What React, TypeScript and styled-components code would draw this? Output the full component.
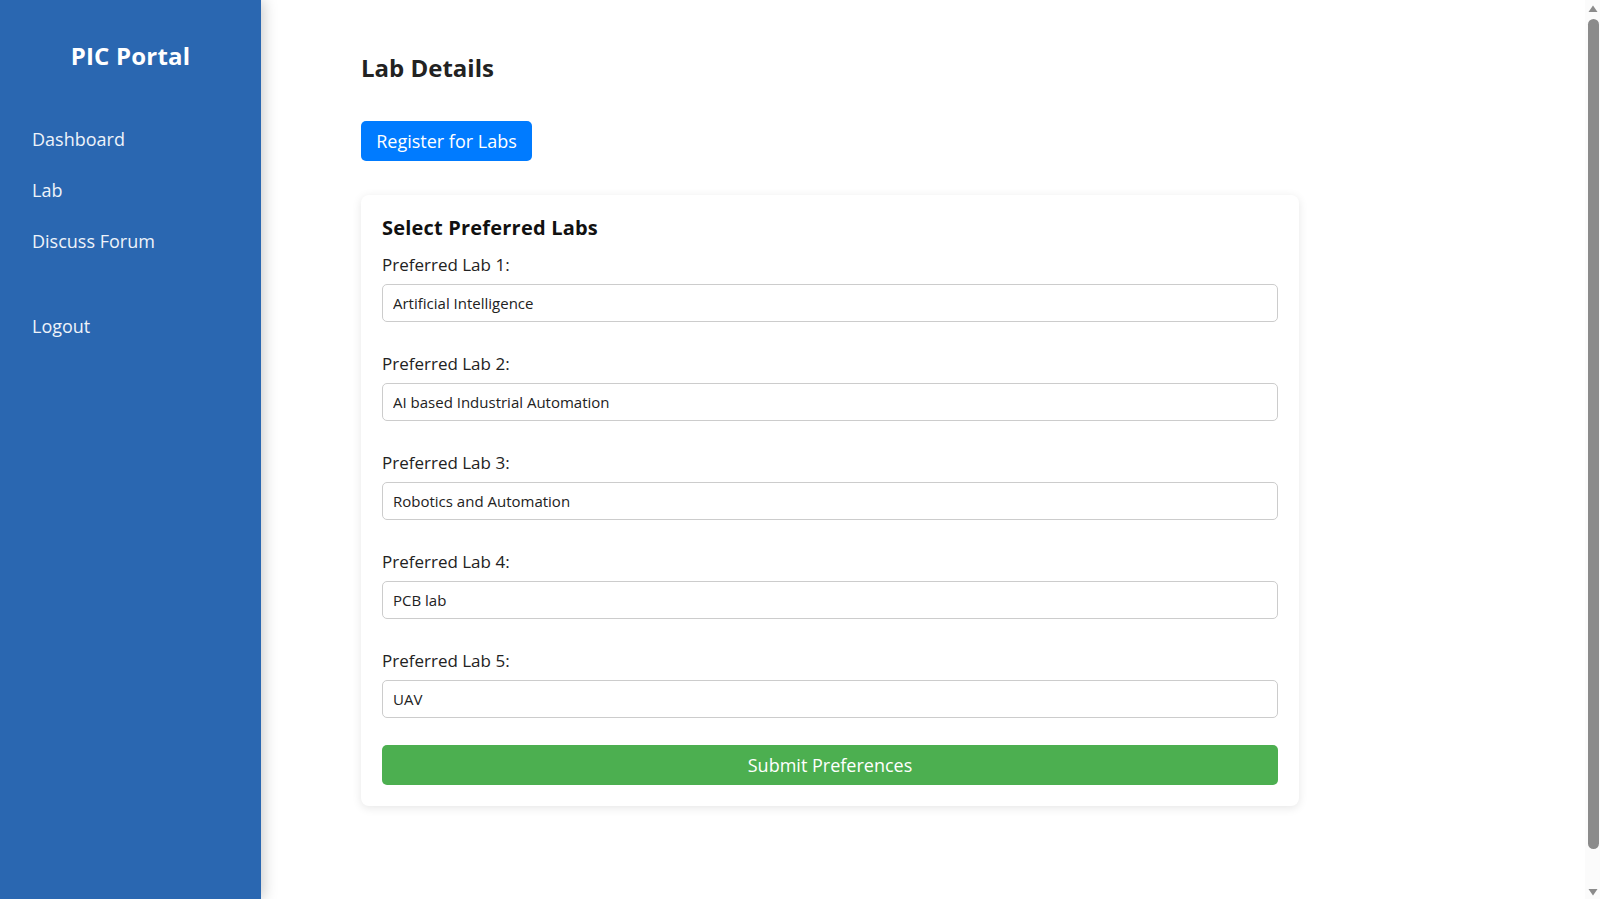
import React from "react";
import styled, { createGlobalStyle } from "styled-components";

const GlobalStyle = createGlobalStyle`
  html, body {
    margin: 0;
    padding: 0;
    background: #ffffff;
  }
  body {
    font-family: "Open Sans", "Liberation Sans", sans-serif;
    color: #222;
  }
  * { box-sizing: border-box; }
`;

const Layout = styled.div`
  display: flex;
  min-height: 100vh;
`;

const Sidebar = styled.aside`
  width: 261px;
  flex-shrink: 0;
  background: #2a67b1;
  box-shadow: 2px 0 14px rgba(0, 0, 0, 0.22);
  display: flex;
  flex-direction: column;
  padding: 40px 0 0 32px;
  position: relative;
  z-index: 1;
`;

const Brand = styled.h1`
  margin: 0 0 0 -32px;
  font-size: 24px;
  line-height: 32px;
  font-weight: 700;
  color: #fff;
  text-align: center;
  letter-spacing: 0.2px;
`;

const NavList = styled.nav`
  display: flex;
  flex-direction: column;
  margin-top: 55px;
`;

const NavLink = styled.a<{ $gap?: number }>`
  font-size: 18px;
  line-height: 24px;
  color: #eef3fa;
  text-decoration: none;
  margin-bottom: ${(p) => p.$gap ?? 27}px;
  cursor: pointer;
`;

const Main = styled.main`
  flex: 1;
  padding: 53px 100px 40px 100px;
`;

const Title = styled.h2`
  margin: 0;
  font-size: 24px;
  line-height: 30px;
  font-weight: 700;
  color: #222;
`;

const RegisterButton = styled.button`
  margin-top: 38px;
  height: 40px;
  width: 171px;
  border: none;
  border-radius: 5px;
  background: #007bff;
  color: #fff;
  font-family: inherit;
  font-size: 18px;
  cursor: pointer;
`;

const Card = styled.section`
  margin-top: 34px;
  width: 938px;
  background: #fff;
  border-radius: 8px;
  box-shadow: 0 2px 10px rgba(0, 0, 0, 0.1);
  padding: 20px 20px 21px 21px;
  display: flex;
  flex-direction: column;
`;

const CardTitle = styled.h3`
  margin: 0 0 13px;
  font-size: 20px;
  line-height: 26px;
  font-weight: 700;
  color: #111;
  letter-spacing: 0.2px;
`;

const Field = styled.div`
  display: flex;
  flex-direction: column;
  gap: 8px;
  margin-bottom: 31px;
  &:last-of-type {
    margin-bottom: 27px;
  }
`;

const Label = styled.label`
  font-size: 17px;
  line-height: 22px;
  font-weight: 500;
  color: #222;
`;

const Input = styled.input`
  height: 38px;
  width: 896px;
  border: 1px solid #ccc;
  border-radius: 5px;
  padding: 0 10px;
  font-family: inherit;
  font-size: 15px;
  color: #222;
  background: #fff;
`;

const SubmitButton = styled.button`
  height: 40px;
  width: 896px;
  border: none;
  border-radius: 5px;
  background: #4caf50;
  color: #fff;
  font-family: inherit;
  font-size: 18px;
  cursor: pointer;
`;

/* Page scrollbar drawn over the right edge of the window */
const ScrollTrack = styled.div`
  position: fixed;
  top: 0;
  right: 0;
  width: 15px;
  height: 100vh;
  background: #fbfbfb;
  display: flex;
  flex-direction: column;
  align-items: center;
  z-index: 10;
`;

const ScrollArrow = styled.svg`
  flex-shrink: 0;
  width: 15px;
  height: 17px;
  display: block;
`;

const ScrollThumb = styled.div`
  flex: 1;
  width: 11px;
  margin: 2px 0 33px 1px;
  background: #8b8b8b;
  border-radius: 6px;
`;

const labs = [
  "Artificial Intelligence",
  "AI based Industrial Automation",
  "Robotics and Automation",
  "PCB lab",
  "UAV",
];

export default function App() {
  return (
    <>
      <GlobalStyle />
      <Layout>
        <Sidebar>
          <Brand>PIC Portal</Brand>
          <NavList>
            <NavLink>Dashboard</NavLink>
            <NavLink>Lab</NavLink>
            <NavLink $gap={61}>Discuss Forum</NavLink>
            <NavLink>Logout</NavLink>
          </NavList>
        </Sidebar>
        <Main>
          <Title>Lab Details</Title>
          <RegisterButton>Register for Labs</RegisterButton>
          <Card>
            <CardTitle>Select Preferred Labs</CardTitle>
            {labs.map((lab, i) => (
              <Field key={i}>
                <Label>Preferred Lab {i + 1}:</Label>
                <Input defaultValue={lab} readOnly />
              </Field>
            ))}
            <SubmitButton>Submit Preferences</SubmitButton>
          </Card>
        </Main>
      </Layout>
      <ScrollTrack aria-hidden="true">
        <ScrollArrow viewBox="0 0 15 17">
          <path d="M3.5 12 L8 5.5 L12.5 12 Z" fill="#8b8b8b" />
        </ScrollArrow>
        <ScrollThumb />
        <ScrollArrow viewBox="0 0 15 17">
          <path d="M3.5 7 L8 13.5 L12.5 7 Z" fill="#8b8b8b" />
        </ScrollArrow>
      </ScrollTrack>
    </>
  );
}
